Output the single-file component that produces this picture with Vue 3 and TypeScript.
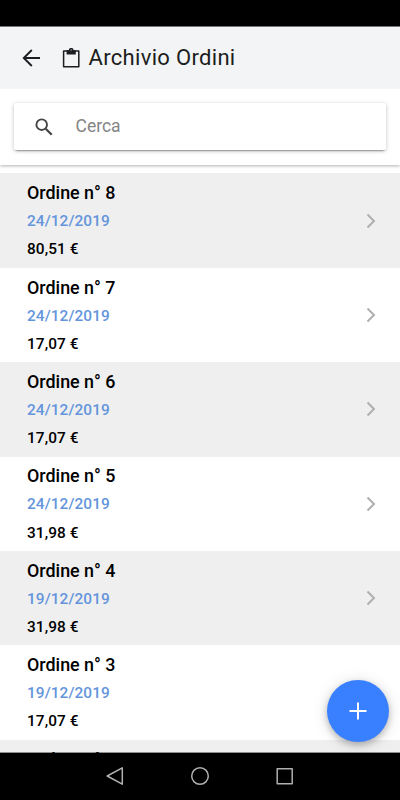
<script setup lang="ts">
interface Order {
  id: number
  date: string
  total: string
}

const orders: Order[] = [
  { id: 8, date: '24/12/2019', total: '80,51 €' },
  { id: 7, date: '24/12/2019', total: '17,07 €' },
  { id: 6, date: '24/12/2019', total: '17,07 €' },
  { id: 5, date: '24/12/2019', total: '31,98 €' },
  { id: 4, date: '19/12/2019', total: '31,98 €' },
  { id: 3, date: '19/12/2019', total: '17,07 €' },
  { id: 2, date: '19/12/2019', total: '17,07 €' },
]
</script>

<template>
  <div class="screen">
    <div class="status-bar"></div>
    <header class="toolbar">
      <svg class="back" viewBox="0 0 18 18" aria-label="Indietro">
        <path d="M18 9H2M9.800 1 1.800 9l8 8" fill="none" stroke="currentColor" stroke-width="1.9" />
      </svg>
      <svg class="clipboard" viewBox="0 0 18 20">
        <path d="M1.600 3h15.200v15.700H1.600z" fill="none" stroke="currentColor" stroke-width="1.5" stroke-linejoin="round" />
        <path fill-rule="evenodd" d="M4.600 2.300h2.200a2.300 2.300 0 0 1 4.800 0h2.200v4.200H4.600zM9.200 1.500a.9.9 0 1 0 0 1.800.9.9 0 0 0 0-1.800z" fill="currentColor" />
      </svg>
      <h1>Archivio Ordini</h1>
    </header>
    <div class="search-area">
      <div class="search">
        <svg viewBox="0 0 18 18">
          <circle cx="6.700" cy="6.700" r="5.300" fill="none" stroke="currentColor" stroke-width="1.900" />
          <path d="m10.700 10.700 6 6" stroke="currentColor" stroke-width="2.200" />
        </svg>
        <span>Cerca</span>
      </div>
    </div>
    <main class="list">
      <div v-for="order in orders" :key="order.id" class="row">
        <div class="info">
          <h2>Ordine n° {{ order.id }}</h2>
          <p class="date">{{ order.date }}</p>
          <p class="total">{{ order.total }}</p>
        </div>
        <svg class="chevron" viewBox="0 0 10 16">
          <path d="m1.500 1.500 6.500 6.500-6.500 6.500" fill="none" stroke="currentColor" stroke-width="2" />
        </svg>
      </div>
    </main>
    <button class="fab" aria-label="Nuovo ordine">
      <svg viewBox="0 0 18 18">
        <path d="M9 .5v17M.5 9h17" stroke="currentColor" stroke-width="2" />
      </svg>
    </button>
    <nav class="nav-bar">
      <svg viewBox="0 0 20 20"><path d="M17.300 1.800v16.400L2.200 10z" /></svg>
      <svg viewBox="0 0 20 20"><circle cx="10" cy="10" r="8.300" /></svg>
      <svg viewBox="0 0 20 20"><rect x="2.200" y="2.700" width="15" height="15" /></svg>
    </nav>
  </div>
</template>

<style>
body {
  background: #fff;
}
</style>

<style scoped>
.screen {
  position: relative;
  display: flex;
  flex-direction: column;
  width: 400px;
  height: 800px;
  overflow: hidden;
  background: #fff;
  font-family: Roboto, sans-serif;
  color: #000;
}

.status-bar {
  flex: none;
  height: 26px;
  background: #000;
}

.toolbar {
  flex: none;
  display: flex;
  align-items: center;
  box-sizing: border-box;
  height: 63px;
  padding-left: 22px;
  border-top: 1px solid #77787a;
  background: #f3f4f6;
  color: #1c1d20;
}

.back {
  width: 18px;
  height: 18px;
}

.clipboard {
  width: 18px;
  height: 20px;
  margin-left: 22px;
}

h1 {
  margin: 0 0 0 8.500px;
  font-size: 22px;
  font-weight: 400;
  line-height: 30px;
  letter-spacing: 0.320px;
}

.search-area {
  position: relative;
  flex: none;
  box-sizing: border-box;
  height: 76px;
  padding: 14px 14px 0;
  background: #fff;
  clip-path: inset(0 0 -8px 0);
  box-shadow: 0 1px 3px rgba(0, 0, 0, 0.3);
}

.search {
  display: flex;
  align-items: center;
  height: 47px;
  border-radius: 2px;
  background: #fff;
  box-shadow: 0 2px 2px -2px rgba(0, 0, 0, 0.8), 0 1px 4px rgba(0, 0, 0, 0.24);
  color: #444;
}

.search svg {
  width: 18px;
  height: 18px;
  margin-left: 21px;
}

.search span {
  margin-left: 22.500px;
  font-size: 17.500px;
  line-height: 20px;
  padding-bottom: 1px;
  font-weight: 400;
  color: #858585;
}

.list {
  flex: 1;
  min-height: 0;
  padding-top: 8.400px;
  overflow: hidden;
}

.row {
  display: flex;
  align-items: center;
  justify-content: space-between;
  box-sizing: border-box;
  height: 94.400px;
  padding: 0 24px 0 27px;
}

.row:nth-child(odd) {
  background: #efefef;
}

.info {
  padding-top: 1.600px;
}

h2,
p {
  margin: 0;
}

h2 {
  font-size: 17.900px;
  font-weight: 500;
  line-height: 28px;
}

p {
  font-size: 15.400px;
  font-weight: 500;
  line-height: 28.200px;
  letter-spacing: 0.080px;
}

.date {
  color: #6495dc;
}

.chevron {
  width: 10px;
  height: 16px;
  color: #afafaf;
}

.fab {
  position: absolute;
  right: 11px;
  bottom: 58px;
  display: flex;
  align-items: center;
  justify-content: center;
  width: 62px;
  height: 62px;
  padding: 0;
  border: 0;
  border-radius: 50%;
  background: #3880ff;
  box-shadow: 0 3px 6px rgba(0, 0, 0, 0.22), 0 2px 16px rgba(0, 0, 0, 0.14);
  color: #fff;
}

.fab svg {
  width: 18px;
  height: 18px;
}

.nav-bar {
  position: relative;
  flex: none;
  display: flex;
  align-items: center;
  justify-content: center;
  gap: 65px;
  box-sizing: border-box;
  height: 48px;
  margin-top: -1px;
  padding-bottom: 1px;
  border-top: 1px solid rgba(0, 0, 0, 0.4);
  background: #000;
  background-clip: padding-box;
}

.list {
  margin-bottom: 0;
}

.nav-bar svg {
  width: 20px;
  height: 20px;
  fill: none;
  stroke: #b0b0b0;
  stroke-width: 1.500;
  stroke-linejoin: round;
}
</style>
